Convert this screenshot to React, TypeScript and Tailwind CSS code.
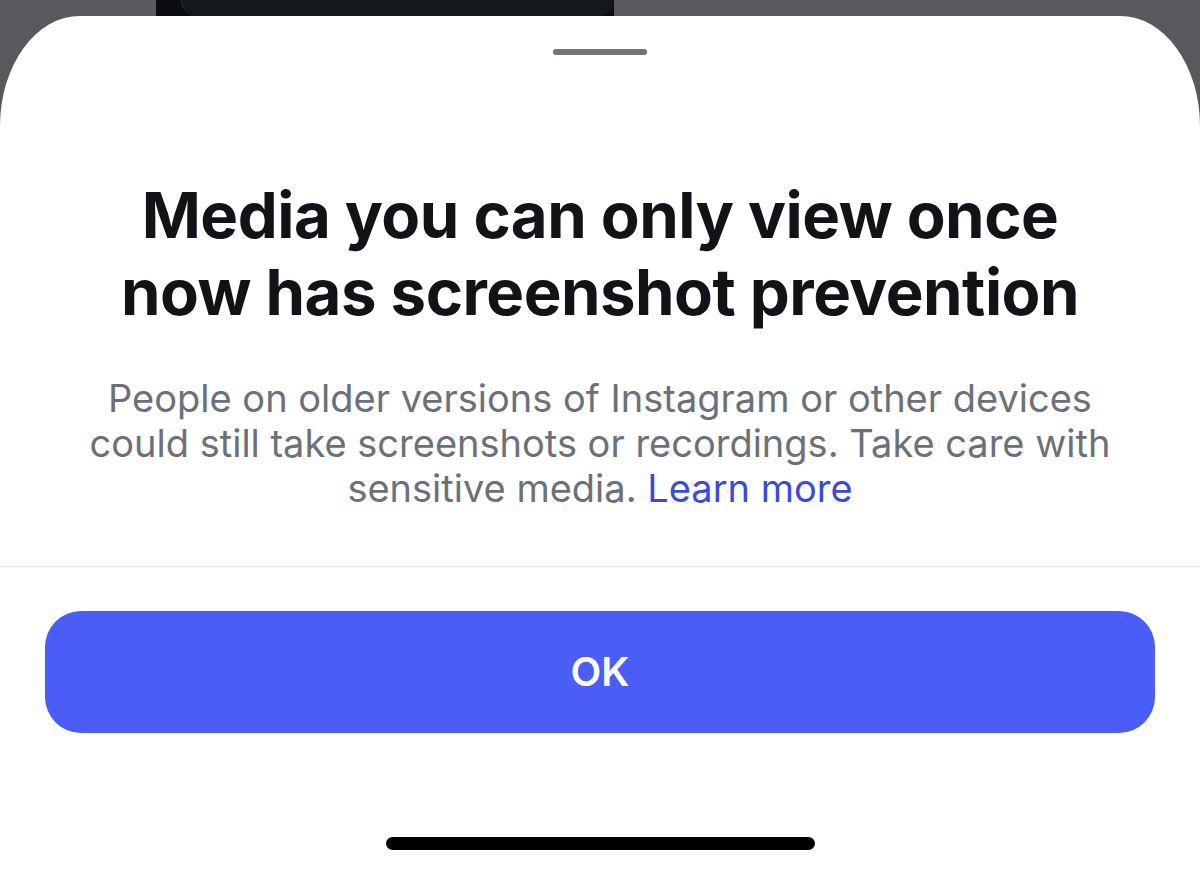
export default function App() {
  return (
    <div className="w-[1200px] h-[873px] bg-[#58595d] overflow-hidden flex flex-col font-['Inter','Liberation_Sans',sans-serif]">
      {/* bit of the screen behind the sheet */}
      <div className="h-4 shrink-0 flex pl-[156px]">
        <div className="w-[458px] h-full bg-[#0b0d10] pl-[25px]">
          <div className="h-full bg-[#14171b] rounded-b-[18px] border-l border-[#2a2d31]" />
        </div>
      </div>

      <div className="flex-1 bg-white rounded-tl-[80px_110px] rounded-tr-[80px_110px] flex flex-col items-center">
        <div className="mt-[33px] w-[94px] h-[6px] rounded-full bg-[#71747b]" />

        <h1 className="mt-[121px] text-center text-[63.5px] leading-[77px] font-bold tracking-[-0.5px] text-[#111318]">
          Media you can only view once
          <br />
          now has screenshot prevention
        </h1>

        <p className="mt-[46px] text-center text-[38px] leading-[45px] text-[#6b7079]">
          People on older versions of Instagram or other devices
          <br />
          could still take screenshots or recordings. Take care with
          <br />
          sensitive media. <span className="text-[#3b4bd8]">Learn more</span>
        </p>

        <div className="mt-[55px] w-full h-px bg-[#e6e6e8]" />

        <div className="w-full px-[45px] mt-[44px]">
          <button className="w-full h-[122px] rounded-[36px] bg-[#4a5ef7] text-white text-[40px] font-semibold">
            OK
          </button>
        </div>

        <div className="mt-[104px] w-[429px] h-[13px] rounded-full bg-black" />
      </div>
    </div>
  );
}
